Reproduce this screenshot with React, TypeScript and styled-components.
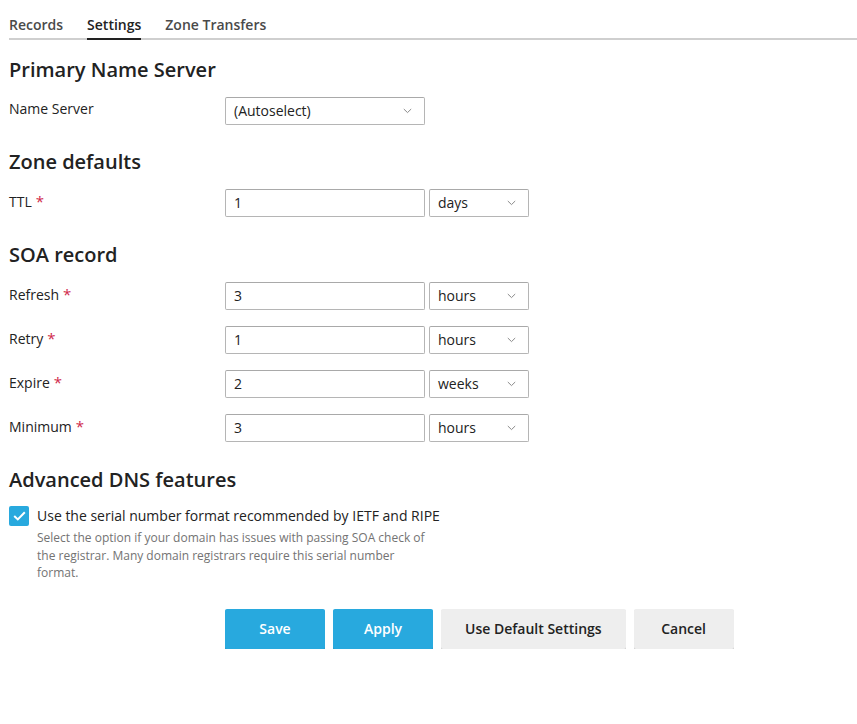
import React from "react";
import styled, { createGlobalStyle } from "styled-components";

const GlobalStyle = createGlobalStyle`
  html, body { margin: 0; padding: 0; background: #fff; }
  body { font-family: "Open Sans", "Liberation Sans", sans-serif; color: #222; }
  * { box-sizing: border-box; }
`;

const Page = styled.div`
  padding-left: 9px;
  width: 857px;
`;

const TabBar = styled.div`
  display: flex;
  gap: 24px;
  height: 40px;
  align-items: flex-end;
  border-bottom: 2px solid #cfcfcf;
`;

const Tab = styled.div<{ $active?: boolean }>`
  font-size: 14px;
  font-weight: 600;
  color: ${(p) => (p.$active ? "#222" : "#4a4a4a")};
  line-height: 20px;
  padding-bottom: 3px;
  margin-bottom: -2px;
  border-bottom: 2px solid ${(p) => (p.$active ? "#222" : "transparent")};
`;

const Section = styled.section<{ $top: number }>`
  margin-top: ${(p) => p.$top}px;
  display: flex;
  flex-direction: column;
  gap: 16px;
`;

const Heading = styled.h2`
  margin: 0 0 -3px;
  font-size: 20px;
  font-weight: 600;
  line-height: 28px;
  color: #222;
`;

const Row = styled.div`
  display: flex;
  align-items: flex-start;
`;

const Label = styled.div`
  width: 216px;
  height: 28px;
  font-size: 14px;
  line-height: 20px;
  padding-top: 2px;
  color: #222;
`;

const Required = styled.span`
  color: #d0284a;
  font-size: 15px;
  line-height: 20px;
  margin-left: 4px;
`;

const Controls = styled.div`
  display: flex;
  gap: 4px;
`;

const Input = styled.div`
  width: 200px;
  height: 28px;
  border: 1px solid #b5b5b5;
  border-top-color: #a9a9a9;
  border-radius: 2px;
  font-size: 14px;
  line-height: 26px;
  padding: 0 8px;
  color: #222;
`;

const Select = styled.div<{ $wide?: boolean }>`
  width: ${(p) => (p.$wide ? "200px" : "100px")};
  height: 28px;
  border: 1px solid #b5b5b5;
  border-top-color: #a9a9a9;
  border-radius: 2px;
  font-size: 14px;
  line-height: 26px;
  padding: 0 12px 0 8px;
  display: flex;
  justify-content: space-between;
  align-items: center;
  color: #222;
`;

const Chevron = () => (
  <svg width="9" height="6" viewBox="0 0 9 6" fill="none">
    <path d="M0.8 1 L4.5 4.6 L8.2 1" stroke="#8a8a8a" strokeWidth="1" />
  </svg>
);

const CheckRow = styled.div`
  display: flex;
  gap: 8px;
  align-items: flex-start;
  margin-top: -1px;
`;

const Box = styled.div`
  width: 20px;
  height: 20px;
  border-radius: 2px;
  background: #28a9de;
  display: flex;
  align-items: center;
  justify-content: center;
  flex: none;
`;

const CheckText = styled.div`
  display: flex;
  flex-direction: column;
`;

const CheckLabel = styled.div`
  font-size: 14px;
  line-height: 20px;
  color: #222;
`;

const Hint = styled.div`
  width: 400px;
  font-size: 12px;
  line-height: 17.5px;
  color: #737373;
  margin-top: 3px;
`;

const Buttons = styled.div`
  display: flex;
  gap: 8px;
  margin-top: 27px;
  padding-left: 216px;
`;

const Button = styled.button<{ $primary?: boolean }>`
  min-width: 100px;
  height: 40px;
  padding: 0 24px;
  border: none;
  border-radius: 2px;
  font-family: inherit;
  font-size: 14px;
  font-weight: 600;
  color: ${(p) => (p.$primary ? "#fff" : "#222")};
  background: ${(p) => (p.$primary ? "#28a9de" : "#eeeeee")};
  box-shadow: 0 1px 0 ${(p) => (p.$primary ? "#1d8fbf" : "#c8c8c8")};
`;

const Field = ({ label, value, unit }: { label: string; value: string; unit: string }) => (
  <Row>
    <Label>
      {label}
      <Required>*</Required>
    </Label>
    <Controls>
      <Input>{value}</Input>
      <Select>
        {unit}
        <Chevron />
      </Select>
    </Controls>
  </Row>
);

export default function App() {
  return (
    <>
      <GlobalStyle />
      <Page>
        <TabBar>
          <Tab>Records</Tab>
          <Tab $active>Settings</Tab>
          <Tab>Zone Transfers</Tab>
        </TabBar>

        <Section $top={16}>
          <Heading>Primary Name Server</Heading>
          <Row>
            <Label>Name Server</Label>
            <Select $wide>
              (Autoselect)
              <Chevron />
            </Select>
          </Row>
        </Section>

        <Section $top={23}>
          <Heading>Zone defaults</Heading>
          <Field label="TTL" value="1" unit="days" />
        </Section>

        <Section $top={24}>
          <Heading>SOA record</Heading>
          <Field label="Refresh" value="3" unit="hours" />
          <Field label="Retry" value="1" unit="hours" />
          <Field label="Expire" value="2" unit="weeks" />
          <Field label="Minimum" value="3" unit="hours" />
        </Section>

        <Section $top={24}>
          <Heading>Advanced DNS features</Heading>
          <CheckRow>
            <Box>
              <svg width="13" height="10" viewBox="0 0 13 10" fill="none">
                <path d="M1.2 5 L4.8 8.4 L11.8 1.2" stroke="#fff" strokeWidth="2" />
              </svg>
            </Box>
            <CheckText>
              <CheckLabel>Use the serial number format recommended by IETF and RIPE</CheckLabel>
              <Hint>
                Select the option if your domain has issues with passing SOA check of the registrar. Many domain
                registrars require this serial number format.
              </Hint>
            </CheckText>
          </CheckRow>
        </Section>

        <Buttons>
          <Button $primary>Save</Button>
          <Button $primary>Apply</Button>
          <Button>Use Default Settings</Button>
          <Button>Cancel</Button>
        </Buttons>
      </Page>
    </>
  );
}
